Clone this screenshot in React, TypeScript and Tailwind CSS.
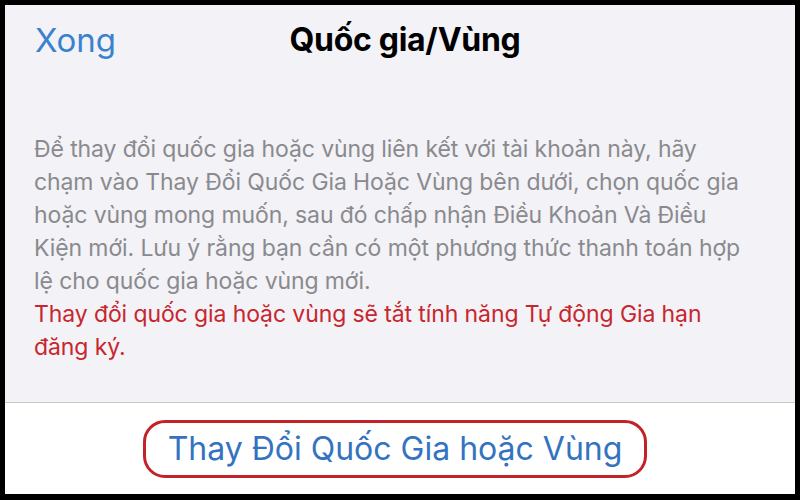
const bodyLines = [
  'Để thay đổi quốc gia hoặc vùng liên kết với tài khoản này, hãy',
  'chạm vào Thay Đổi Quốc Gia Hoặc Vùng bên dưới, chọn quốc gia',
  'hoặc vùng mong muốn, sau đó chấp nhận Điều Khoản Và Điều',
  'Kiện mới. Lưu ý rằng bạn cần có một phương thức thanh toán hợp',
  'lệ cho quốc gia hoặc vùng mới.',
];

const warningLines = ['Thay đổi quốc gia hoặc vùng sẽ tắt tính năng Tự động Gia hạn', 'đăng ký.'];

const App = () => {
  return (
    <div className="w-[800px] h-[500px] bg-black p-[5px] pb-[6px] font-['Inter',sans-serif]">
      <div className="flex flex-col h-full overflow-hidden">
        <div className="bg-[#f2f2f7] h-[397px] flex flex-col">
          <div className="grid grid-cols-[1fr_auto_1fr] items-center pt-[9px] px-[30px]">
            <button className="justify-self-start text-[33px] text-[#3a82cc] leading-[52px]">Xong</button>
            <h1 className="ml-[10px] text-[32px] font-bold text-black leading-[52px] tracking-[-0.3px]">Quốc gia/Vùng</h1>
            <div />
          </div>
          <div className="mt-[67px] px-[29px] text-[23px] leading-[33px] tracking-[-0.1px]">
            <p className="text-[#8a8a8e]">
              {bodyLines.map(line => (
                <span key={line} className="block whitespace-nowrap">{line}</span>
              ))}
            </p>
            <p className="text-[#c8262d]">
              {warningLines.map(line => (
                <span key={line} className="block whitespace-nowrap">{line}</span>
              ))}
            </p>
          </div>
        </div>
        <div className="h-px bg-[#c8c7cc]" />
        <div className="flex-1 bg-white flex items-start justify-center pt-[17px]">
          <button className="ml-[-10px] h-[58px] px-[22px] rounded-[22px] border-[3px] border-[#c42229] text-[32px] text-[#3473c0] leading-none">
            Thay Đổi Quốc Gia hoặc Vùng
          </button>
        </div>
      </div>
    </div>
  );
};

export default App;
